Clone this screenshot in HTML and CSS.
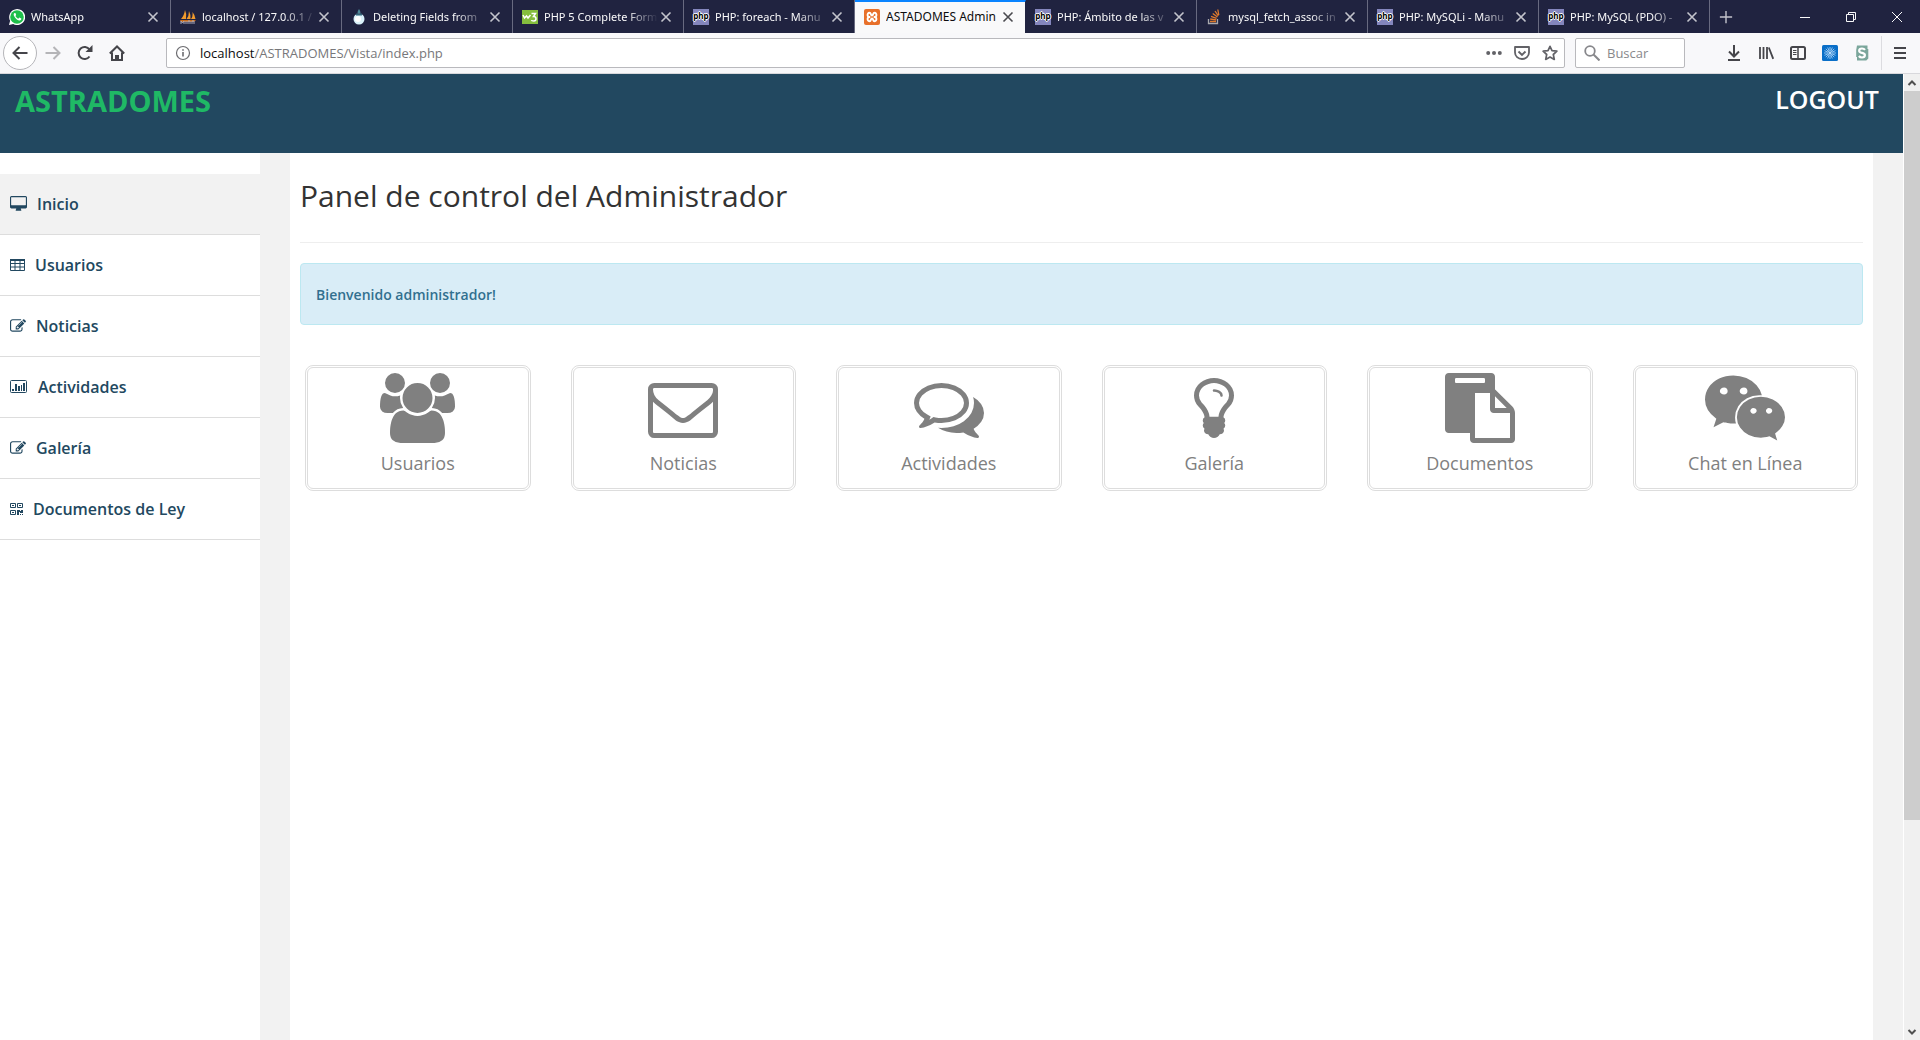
FILE: index.html
```html
<!DOCTYPE html>
<html lang="es">
<head>
<meta charset="utf-8">
<title>ASTADOMES Admin</title>
<link rel="stylesheet" href="styles.css">
</head>
<body>
<svg class="sprite" aria-hidden="true">
  <symbol id="close" viewBox="0 0 16 16"><path d="M3.5 3.5l9 9M12.5 3.5l-9 9" fill="none" stroke="currentColor" stroke-width="1.6"/></symbol>
  <symbol id="edit" viewBox="0 0 1792 1792"><path d="M888 1184l116-116-152-152-116 116v56h96v96h56zm440-720q-16-16-33 1l-350 350q-17 17-1 33t33-1l350-350q17-17 1-33zm80 594v190q0 119-84.5 203.5t-203.5 84.5h-832q-119 0-203.5-84.5t-84.5-203.5v-832q0-119 84.5-203.5t203.5-84.5h832q63 0 117 25 15 7 18 23 3 17-9 29l-49 49q-14 14-32 8-23-6-45-6h-832q-66 0-113 47t-47 113v832q0 66 47 113t113 47h832q66 0 113-47t47-113v-126q0-13 9-22l64-64q15-15 35-7t20 29zm-96-738l288 288-672 672h-288v-288zm444 132l-92 92-288-288 92-92q28-28 68-28t68 28l152 152q28 28 28 68t-28 68z"/></symbol>
</svg>

<div class="tabbar">
  <div class="tabs">
    <div class="tab"><svg class="fav" viewBox="0 0 16 16"><path d="M0 16l1.100-4.200A8 8 0 1 1 4.200 15z" fill="#fff"/><circle cx="8" cy="8" r="6.800" fill="#1fbf4b"/><path d="M5.500 4c-1.300 1-1 2.500.5 4.500s3.300 3.200 4.800 3c1-.2 1.600-1 1.500-1.900L10.300 8.600l-1 1.100C8 9.200 7 8.200 6.400 7l.8-1L6.400 4z" fill="#fff"/></svg><span class="tab-title">WhatsApp</span><button class="tab-close" aria-label="Cerrar"><svg viewBox="0 0 16 16"><use href="#close"/></svg></button></div>
    <div class="tab"><svg class="fav" viewBox="0 0 16 16"><path d="M1 10Q4 7 5 1q2 4 1 9zM6.500 10Q9 7 9 2q2 4 1.500 8zM11 10q2-2 1.500-7Q15 6 15.500 10z" fill="#f29b2c"/><path d="M0 11h16l-2 2H1z" fill="#c96c1c"/><path d="M1 15v-3l1.500 2L4 12v3M6 12v3M8 15v-3h2v3M12 15v-3h2v3" stroke="#aab" fill="none"/></svg><span class="tab-title">localhost / 127.0.0.1 /</span><button class="tab-close" aria-label="Cerrar"><svg viewBox="0 0 16 16"><use href="#close"/></svg></button></div>
    <div class="tab"><svg class="fav" viewBox="0 0 16 16"><path d="M8 0q1.500 2 1.500 4h-3Q6.500 2 8 0z" fill="#4d8a9a"/><circle cx="8" cy="10" r="5.500" fill="#d9f1fa"/><path d="M5 4.500h6v2H5z" fill="#33677a"/><circle cx="7" cy="10" r="3" fill="#fff"/></svg><span class="tab-title">Deleting Fields from</span><button class="tab-close" aria-label="Cerrar"><svg viewBox="0 0 16 16"><use href="#close"/></svg></button></div>
    <div class="tab"><svg class="fav" viewBox="0 0 16 16"><rect y="1" width="16" height="14" fill="#85be3e"/><path d="M1 6l1.500 3L4.500 7l1.500 2L8.500 6M9.500 4.500h4L11.500 7.500q2.500 0 2.500 2.200t-2.200 2.200T9.500 11" fill="none" stroke="#fff" stroke-width="1.500"/></svg><span class="tab-title">PHP 5 Complete Form</span><button class="tab-close" aria-label="Cerrar"><svg viewBox="0 0 16 16"><use href="#close"/></svg></button></div>
    <div class="tab"><span class="fav php">php</span><span class="tab-title">PHP: foreach - Manu</span><button class="tab-close" aria-label="Cerrar"><svg viewBox="0 0 16 16"><use href="#close"/></svg></button></div>
    <div class="tab tab-active"><svg class="fav" viewBox="0 0 16 16"><rect width="16" height="16" rx="2" fill="#e8702a"/><path d="M6.300 8H5.500C3 8 3 3.800 5.300 3.800S6.300 6.500 8 6.500s.4-2.700 2.700-2.700S13 8 10.500 8h-.8M9.700 8h.8c2.500 0 2.500 4.200.2 4.200S9.700 9.500 8 9.500s-.4 2.700-2.700 2.700S3 8 5.500 8" fill="none" stroke="#fff" stroke-width="1.900"/></svg><span class="tab-title">ASTADOMES Admin</span><button class="tab-close" aria-label="Cerrar"><svg viewBox="0 0 16 16"><use href="#close"/></svg></button></div>
    <div class="tab"><span class="fav php">php</span><span class="tab-title">PHP: Ámbito de las v</span><button class="tab-close" aria-label="Cerrar"><svg viewBox="0 0 16 16"><use href="#close"/></svg></button></div>
    <div class="tab"><svg class="fav" viewBox="0 0 16 16"><path d="M2.500 10v4.500h9V10" fill="none" stroke="#a9a9ae" stroke-width="1.300"/><path d="M4 12.500h6M4.200 10l6 .8M5 7.300l5.600 2M6.700 4.500l4.800 3.500M9 2l3.300 4.800M11.800.5l1 5.500" stroke="#e07a2c" stroke-width="1.300"/></svg><span class="tab-title">mysql_fetch_assoc in</span><button class="tab-close" aria-label="Cerrar"><svg viewBox="0 0 16 16"><use href="#close"/></svg></button></div>
    <div class="tab"><span class="fav php">php</span><span class="tab-title">PHP: MySQLi - Manu</span><button class="tab-close" aria-label="Cerrar"><svg viewBox="0 0 16 16"><use href="#close"/></svg></button></div>
    <div class="tab"><span class="fav php">php</span><span class="tab-title">PHP: MySQL (PDO) -</span><button class="tab-close" aria-label="Cerrar"><svg viewBox="0 0 16 16"><use href="#close"/></svg></button></div>
  </div>
  <button class="new-tab" aria-label="Nueva pestaña"><svg viewBox="0 0 16 16"><path d="M8 1v14M1 8h14" stroke="currentColor" stroke-width="1.600"/></svg></button>
  <div class="window-controls">
    <button aria-label="Minimizar"><svg viewBox="0 0 10 10"><path d="M0 5.500h10" stroke="currentColor"/></svg></button>
    <button aria-label="Restaurar"><svg viewBox="0 0 10 10"><path d="M.5 2.500h7v7h-7zM2.500 2.500v-2h7v7h-2" fill="none" stroke="currentColor"/></svg></button>
    <button aria-label="Cerrar ventana"><svg viewBox="0 0 10 10"><path d="M0 0l10 10M10 0L0 10" stroke="currentColor"/></svg></button>
  </div>
</div>

<div class="toolbar">
  <button class="back" aria-label="Atrás"><svg viewBox="0 0 16 16"><path d="M15.500 8H1.500M7.500 2L1.500 8l6 6" fill="none" stroke="currentColor" stroke-width="2"/></svg></button>
  <button class="tool disabled" aria-label="Adelante"><svg viewBox="0 0 16 16"><path d="M.5 8h14M8.500 2l6 6-6 6" fill="none" stroke="currentColor" stroke-width="2"/></svg></button>
  <button class="tool" aria-label="Recargar"><svg viewBox="0 0 16 16"><path d="M12.500 11.500A6 6 0 1 1 12.500 4.500" fill="none" stroke="currentColor" stroke-width="2"/><path d="M15.500 0v7h-7z" fill="currentColor"/></svg></button>
  <button class="tool" aria-label="Inicio"><svg viewBox="0 0 16 16"><path d="M.8 8.500L8 1.500l7.200 7M3 7.500V15h10V7.500" fill="none" stroke="currentColor" stroke-width="2"/><path d="M6 15v-5h4v5z" fill="currentColor"/></svg></button>
  <div class="urlbar">
    <svg class="info" viewBox="0 0 16 16"><circle cx="8" cy="8" r="6.500" fill="none" stroke="currentColor" stroke-width="1.200"/><path d="M8 7v4.500M8 4.200v1.600" stroke="currentColor" stroke-width="1.600"/></svg>
    <span class="url">localhost<span class="path">/ASTRADOMES/Vista/index.php</span></span>
    <button class="url-btn" aria-label="Más acciones"><svg viewBox="0 0 16 16"><circle cx="2.200" cy="8" r="2"/><circle cx="8" cy="8" r="2"/><circle cx="13.800" cy="8" r="2"/></svg></button>
    <button class="url-btn" aria-label="Guardar en Pocket"><svg viewBox="0 0 16 16"><path d="M1 2h14v5.500a7 6.500 0 0 1-14 0z" fill="none" stroke="currentColor" stroke-width="1.800" stroke-linejoin="round"/><path d="M4.500 6.500L8 10l3.500-3.500" fill="none" stroke="currentColor" stroke-width="1.900"/></svg></button>
    <button class="url-btn" aria-label="Marcador"><svg viewBox="0 0 16 16"><path d="M8 1.300l2 4.400 4.900.5-3.600 3.300 1 4.900L8 12l-4.300 2.400 1-4.900L1.100 6.200 6 5.700z" fill="none" stroke="currentColor" stroke-width="1.700" stroke-linejoin="round"/></svg></button>
  </div>
  <label class="search"><svg viewBox="0 0 16 16"><circle cx="6" cy="6" r="4.800" fill="none" stroke="currentColor" stroke-width="1.800"/><path d="M9.500 9.500l6 6" stroke="currentColor" stroke-width="2"/></svg><input type="text" placeholder="Buscar" aria-label="Buscar"></label>
  <div class="tools">
    <button class="tool" aria-label="Descargas"><svg viewBox="0 0 16 16"><path d="M8 0v11M3 6.500l5 5 5-5M2 15h12" fill="none" stroke="currentColor" stroke-width="2"/></svg></button>
    <button class="tool" aria-label="Biblioteca"><svg viewBox="0 0 16 16"><path d="M2 2v12M5.500 2v12M9 2v12M10.800 2.500l4.400 11.300" fill="none" stroke="currentColor" stroke-width="1.800"/></svg></button>
    <button class="tool" aria-label="Barras laterales"><svg viewBox="0 0 16 16"><rect x="1" y="2" width="14" height="12" rx="1.500" fill="none" stroke="currentColor" stroke-width="2"/><path d="M8 2v12" stroke="currentColor" stroke-width="1.500"/><path d="M3 5.500h3.500M3 7.500h3.500M3 9.500h3.500" stroke="currentColor"/></svg></button>
    <button class="tool" aria-label="Extensión"><svg viewBox="0 0 16 16"><rect width="16" height="16" rx="1.500" fill="#0a6fc8"/><path d="M8 2v12M2 8h12M3.800 3.800l8.400 8.400M12.200 3.800l-8.400 8.400M5.700 2.500l1.500 3.700M8.800 9.800l1.500 3.700M10.300 2.500L8.800 6.200M7.200 9.800l-1.500 3.700M2.500 5.700l3.700 1.500M9.800 8.800l3.700 1.500M13.500 5.700L9.800 7.200M6.200 8.800l-3.700 1.500" stroke="#cfe8ff" stroke-width=".7"/></svg></button>
    <button class="tool" aria-label="Extensión S"><svg viewBox="0 0 16 16"><path d="M3 .5h10.500V4h.8v9.500l-2 2H3V12h-.8V5z" fill="#7ba69b"/><path d="M11 4.800Q10 3.500 8 3.500q-2.800 0-2.800 2.200Q5.200 7.300 8 7.900t2.900 2.200q0 2.400-2.900 2.400-2 0-3.100-1.500" fill="none" stroke="#fff" stroke-width="2.200"/></svg></button>
    <button class="tool menu" aria-label="Menú"><svg viewBox="0 0 16 16"><path d="M2 3h12M2 8h12M2 13h12" stroke="currentColor" stroke-width="2"/></svg></button>
  </div>
</div>

<div class="viewport">
  <div class="page">
    <header class="header">
      <a class="brand" href="#">ASTRADOMES</a>
      <a class="logout" href="#">LOGOUT</a>
    </header>
    <div class="wrapper">
      <nav class="sidebar">
        <a class="current" href="#"><svg width="17" height="16" viewBox="-64 0 1920 1792"><path d="M1728 992v-832q0-13-9.500-22.500t-22.500-9.500h-1600q-13 0-22.500 9.500t-9.500 22.500v832q0 13 9.500 22.500t22.500 9.500h1600q13 0 22.500-9.500t9.500-22.500zm128-832v1088q0 66-47 113t-113 47h-544q0 37 16 77.500t32 71 16 43.500q0 26-19 45t-45 19h-512q-26 0-45-19t-19-45q0-14 16-44t32-70 16-78h-544q-66 0-113-47t-47-113v-1088q0-66 47-113t113-47h1600q66 0 113 47t47 113z"/></svg>Inicio</a>
        <a href="#"><svg width="15" height="16" viewBox="0 0 15 16"><path d="M.5 3h14v10.500H.5zM.5 6.500h14M.5 10h14M5 3v10.500M10 3v10.500" fill="none" stroke="currentColor"/><path d="M0 2h15v2H0z"/></svg>Usuarios</a>
        <a href="#"><svg width="16" height="16" viewBox="0 0 1792 1792"><use href="#edit"/></svg>Noticias</a>
        <a href="#"><svg width="18" height="16" viewBox="0 0 18 16"><rect x=".5" y="1.500" width="16" height="12" rx="1" fill="none" stroke="currentColor"/><path d="M2 10h2v2H2zM5 5h2v7H5zM8 7h2v5H8zM11 6h1v6h-1zM13 4h2v8h-2z"/></svg>Actividades</a>
        <a href="#"><svg width="16" height="16" viewBox="0 0 1792 1792"><use href="#edit"/></svg>Galería</a>
        <a href="#"><svg width="13" height="16" viewBox="0 0 13 16"><path d="M.5 2.500h5v4h-5zM7.500 2.500h5v4h-5zM.5 9.500h5v4h-5z" fill="none" stroke="currentColor"/><path d="M2 4h2v1H2zM9 4h2v1H9zM2 11h2v1H2zM7 9h3v1h1V9h2v3h-3v-1H9v3H7zM10 13h1v1h-1zM12 13h1v1h-1z"/></svg>Documentos de Ley</a>
      </nav>
      <main class="content">
        <h2>Panel de control del Administrador</h2>
        <hr>
        <div class="alert"><strong>Bienvenido administrador!</strong></div>
        <div class="cards">
          <a class="card" href="#"><svg width="75" height="70" viewBox="0 0 1920 1792"><path d="M593 896q-162 5-265 128h-134q-82 0-138-40.500t-56-118.500q0-353 124-353 6 0 43.500 21t97.500 42.500 119 21.500q67 0 133-23-5 37-5 66 0 139 81 256zm1071 637q0 120-73 189.500t-194 69.500h-874q-121 0-194-69.500t-73-189.500q0-53 3.500-103.500t14-109 26.500-108.500 43-97.500 62-81 85.500-53.500 111.500-20q10 0 43 21.500t73 48 107 48 135 21.500 135-21.500 107-48 73-48 43-21.500q61 0 111.500 20t85.500 53.500 62 81 43 97.500 26.500 108.500 14 109 3.500 103.500zm-1024-1277q0 106-75 181t-181 75-181-75-75-181 75-181 181-75 181 75 75 181zm704 384q0 159-112.500 271.500t-271.500 112.500-271.500-112.500-112.500-271.500 112.500-271.500 271.500-112.500 271.500 112.500 112.500 271.500zm576 225q0 78-56 118.500t-138 40.500h-134q-103-123-265-128 81-117 81-256 0-29-5-66 66 23 133 23 59 0 119-21.500t97.500-42.500 43.500-21q124 0 124 353zm-128-609q0 106-75 181t-181 75-181-75-75-181 75-181 181-75 181 75 75 181z"/></svg><span>Usuarios</span></a>
          <a class="card" href="#"><svg width="70" height="70" viewBox="0 0 1792 1792"><path d="M1664 1504v-768q-32 36-69 66-268 206-426 338-51 43-83 67t-86.500 48.500-102.500 24.500h-2q-48 0-102.500-24.500t-86.500-48.500-83-67q-158-132-426-338-37-30-69-66v768q0 13 9.500 22.500t22.500 9.500h1472q13 0 22.500-9.500t9.500-22.500zm0-1051v-24.500l-.5-13-3-12.500-5.500-9-9-7.500-14-2.500h-1472q-13 0-22.500 9.500t-9.500 22.500q0 168 147 284 193 152 401 317 6 5 35 29.500t46 37.500 44.500 31.500 50.500 27.500 43 9h2q20 0 43-9t50.500-27.500 44.500-31.500 46-37.500 35-29.500q208-165 401-317 54-43 100.500-115.500t46.500-131.500zm128-37v1088q0 66-47 113t-113 47h-1472q-66 0-113-47t-47-113v-1088q0-66 47-113t113-47h1472q66 0 113 47t47 113z"/></svg><span>Noticias</span></a>
          <a class="card" href="#"><svg width="70" height="70" viewBox="0 0 1792 1792"><path d="M704 384q-153 0-286 52t-211.500 141-78.500 191q0 82 53 158t149 132l97 56-35 84q34-20 62-39l44-31 53 10q78 14 153 14 153 0 286-52t211.500-141 78.500-191-78.500-191-211.500-141-286-52zm0-128q191 0 353.500 68.500t256.500 186.500 94 257-94 257-256.500 186.500-353.500 68.500q-86 0-176-16-124 88-278 128-36 9-86 16h-3q-11 0-20.500-8t-11.500-21q-1-3-1-6.500t.5-6.500 2-6l2.500-5 3.500-5.500 4-5 4.500-5 4-4.500q5-6 23-25t26-29.500 22.500-29 25-38.500 20.500-44q-124-72-195-177t-71-224q0-139 94-257t256.500-186.500 353.500-68.500zm822 1169q10 24 20.500 44t25 38.500 22.500 29 26 29.500 23 25q1 1 4 4.500t4.500 5 4 5 3.500 5.500l2.500 5 2 6 .5 6.500-1 6.500q-3 14-13 22t-22 7q-50-7-86-16-154-40-278-128-90 16-176 16-271 0-472-132 58 4 88 4 161 0 309-45t264-129q125-92 192-212t67-254q0-77-23-152 129 71 204 178t75 230q0 120-71 224.500t-195 176.500z"/></svg><span>Actividades</span></a>
          <a class="card" href="#"><svg width="70" height="70" viewBox="0 0 1792 1792"><path d="M1120 576q0 13-9.500 22.500t-22.500 9.500-22.500-9.500-9.500-22.500q0-46-54-71t-106-25q-13 0-22.500-9.500t-9.500-22.500 9.500-22.500 22.500-9.500q50 0 99.500 16t87 54 37.500 90zm160 0q0-72-34.500-134t-90-101.500-123-62-136.500-22.500-136.500 22.500-123 62-90 101.500-34.500 134q0 101 68 180 10 11 30.500 33t30.500 33q128 153 141 298h228q13-145 141-298 10-11 30.500-33t30.500-33q68-79 68-180zm128 0q0 155-103 268-45 49-74.500 87t-59.500 95.500-34 107.500q47 28 47 82 0 37-25 64 25 27 25 64 0 52-45 81 13 23 13 47 0 46-31.500 71t-77.500 25q-20 44-60 70t-87 26-87-26-60-70q-46 0-77.500-25t-31.500-71q0-24 13-47-45-29-45-81 0-37 25-64-25-27-25-64 0-54 47-82-4-50-34-107.500t-59.500-95.500-74.500-87q-103-113-103-268 0-99 44.500-184.500t117-142 164-89 186.500-32.500 186.500 32.500 164 89 117 142 44.500 184.500z"/></svg><span>Galería</span></a>
          <a class="card" href="#"><svg width="70" height="70" viewBox="0 0 1792 1792"><path d="M768 1664h896v-640h-416q-40 0-68-28t-28-68v-416h-384v1152zm256-1440v-64q0-13-9.500-22.500t-22.500-9.500h-704q-13 0-22.500 9.500t-9.500 22.500v64q0 13 9.500 22.500t22.500 9.500h704q13 0 22.500-9.500t9.500-22.500zm256 672h299l-299-299v299zm512 128v672q0 40-28 68t-68 28h-960q-40 0-68-28t-28-68v-160h-544q-40 0-68-28t-28-68v-1344q0-40 28-68t68-28h1088q40 0 68 28t28 68v328q21 13 36 28l408 408q28 28 48 76t20 88z"/></svg><span>Documentos</span></a>
          <a class="card" href="#"><svg width="80" height="70" viewBox="0 0 2048 1792"><path d="M580 461q0-41-25-66t-66-25q-43 0-76 25.500t-33 65.500q0 39 33 64.500t76 25.500q41 0 66-24.500t25-65.500zm743 507q0-28-25.500-50t-65.500-22q-27 0-49.500 22.500t-22.500 49.500q0 28 22.500 50.500t49.500 22.500q40 0 65.500-22t25.500-51zm-236-507q0-41-24.500-66t-65.500-25q-43 0-76 25.500t-33 65.500q0 39 33 64.500t76 25.500q41 0 65.500-24.500t24.500-65.500zm635 507q0-28-26-50t-65-22q-27 0-49.500 22.500t-22.500 49.500q0 28 22.500 50.500t49.500 22.500q39 0 65-22t26-51zm-266-397q-31-4-70-4-169 0-311 77t-223.500 208.500-81.500 287.500q0 78 23 152-35 3-68 3-26 0-50-1.500t-55-6.500-44.500-7-54.500-10.500-50-10.500l-253 127 72-218q-290-203-290-490 0-169 97.500-311t264-223.500 363.500-81.500q176 0 332.500 66t262 182.500 136.500 260.500zm592 561q0 117-68.500 223.500t-185.500 193.500l55 181-199-109q-150 37-218 37-169 0-311-70.500t-223.500-191.500-81.500-264 81.500-264 223.500-191.500 311-70.500q161 0 303 70.500t227.500 192 85.500 263.500z"/></svg><span>Chat en Línea</span></a>
        </div>
      </main>
    </div>
  </div>
  <div class="scrollbar">
    <button aria-label="Subir"><svg viewBox="0 0 10 10"><path d="M1.500 7L5 3.500 8.500 7" fill="none" stroke="currentColor" stroke-width="2"/></svg></button>
    <div class="track"><div class="thumb"></div></div>
    <button aria-label="Bajar"><svg viewBox="0 0 10 10"><path d="M1.500 3L5 6.500 8.500 3" fill="none" stroke="currentColor" stroke-width="2"/></svg></button>
  </div>
</div>
</body>
</html>
```

FILE: styles.css
```css
* { box-sizing: border-box; }

body {
  margin: 0;
  min-height: 100vh;
  display: flex;
  flex-direction: column;
  font-family: "Open Sans", sans-serif;
  font-size: 14px;
  color: #333;
  background: #fff;
}

button {
  display: flex;
  align-items: center;
  justify-content: center;
  padding: 0;
  border: 0;
  background: none;
  color: inherit;
}

a { text-decoration: none; }
svg { display: block; flex: none; fill: currentColor; }
.sprite { position: absolute; width: 0; height: 0; }

/* Tab strip */
.tabbar {
  display: flex;
  height: 33px;
  background: #202340;
  color: #f9f9fa;
}
.tabs { display: flex; flex: 0 1 1710px; min-width: 0; }
.tab {
  flex: 1 1 0;
  min-width: 0;
  display: flex;
  align-items: center;
  padding: 1px 9px 0;
  border-right: 1px solid #686a80;
}
.tab-active {
  background: #f9f9fa;
  color: #0c0c0d;
  border-top: 2px solid #0a84ff;
  border-right-color: #202340;
  padding: 0 9px 1px;
}
.fav { width: 16px; height: 16px; margin-right: 6px; flex: none; }
.php {
  background: #8486bd;
  color: #000;
  font-size: 8px;
  font-weight: 700;
  line-height: 14px;
  text-align: center;
  text-shadow: 1px 0 #fff, -1px 0 #fff, 0 1px #fff, 0 -1px #fff;
}
.tab-title {
  flex: 1;
  min-width: 0;
  font-family: "Noto Sans", sans-serif;
  font-size: 11px;
  line-height: 16px;
  white-space: nowrap;
  overflow: hidden;
  mask-image: linear-gradient(to left, transparent, #000 32px);
}
.tab-active .tab-title { mask-image: none; font-size: 12px; }
.tab-close { width: 16px; height: 16px; color: #c3c4cc; }
.tab-active .tab-close { color: #4a4a4f; }
.tab-close svg { width: 16px; height: 16px; }
.new-tab { width: 32px; color: #c3c4cc; }
.new-tab svg { width: 14px; height: 14px; }
.window-controls { display: flex; margin-left: auto; }
.window-controls button { width: 46px; }
.window-controls svg { width: 10px; height: 10px; }

/* Navigation toolbar */
.toolbar {
  display: flex;
  align-items: center;
  height: 41px;
  padding: 0 3px;
  background: #f8f8fa;
  border-bottom: 1px solid #d8d8dc;
  color: #45454a;
}
.back {
  width: 34px;
  height: 34px;
  border: 1px solid #b5b5b9;
  border-radius: 50%;
  background: #fff;
}
.tool { width: 32px; height: 34px; }
.toolbar .tool svg, .back svg { width: 16px; height: 16px; }
.disabled { color: #b5b5b8; }
.urlbar, .search {
  display: flex;
  align-items: center;
  height: 30px;
  background: #fff;
  border: 1px solid #b9b9bd;
  border-radius: 2px;
}
.urlbar { flex: 1; min-width: 0; margin-left: 33px; }
.info { width: 16px; height: 16px; margin: 0 9px 0 8px; color: #6c6c70; }
.url { flex: 1; min-width: 0; font-size: 13px; color: #0c0c0d; white-space: nowrap; overflow: hidden; }
.path { color: #77777a; }
.url-btn { width: 28px; height: 28px; color: #626267; }
.url-btn svg { width: 16px; height: 16px; }
.search { width: 110px; margin-left: 10px; padding-left: 8px; color: #87878b; }
.search svg { width: 16px; height: 16px; }
.search input {
  flex: 1;
  min-width: 0;
  padding: 0 0 0 7px;
  border: 0;
  background: none;
  font: 13px "Open Sans", sans-serif;
}
.search input::placeholder { color: #88888b; opacity: 1; }
.tools { display: flex; align-items: center; margin-left: 33px; }
.menu { width: 36px; margin-left: 3px; border-left: 1px solid #dcdce0; }

/* Page area and scrollbar */
.viewport { flex: 1; display: flex; }
.page { flex: 1; min-width: 0; display: flex; flex-direction: column; }
.scrollbar {
  width: 17px;
  display: flex;
  flex-direction: column;
  background: #f0f0f0;
  border-left: 1px solid #fff;
  color: #505050;
}
.scrollbar button { height: 17px; }
.scrollbar svg { width: 10px; height: 10px; }
.track { flex: 1; display: grid; grid-template-rows: 18fr 5fr; }
.thumb { background: #cdcdcd; }

.header {
  display: flex;
  justify-content: space-between;
  align-items: flex-start;
  height: 79px;
  padding: 7px 24px 0 15px;
  background: #224860;
  line-height: 40px;
}
.brand { font-size: 29px; font-weight: 700; color: #1fb965; }
.logout { font-size: 25px; line-height: 36px; color: #fff; font-weight: 600; }

.wrapper { flex: 1; display: flex; background: #f2f2f2; }
.sidebar { width: 260px; padding-top: 21px; background: #fff; }
.sidebar a {
  display: flex;
  align-items: center;
  gap: 10px;
  height: 61px;
  padding-left: 10px;
  border-bottom: 1px solid #ddd;
  font-size: 16px;
  font-weight: 600;
  color: #224860;
}
.sidebar .current { background: #f2f2f2; }

.content {
  flex: 1;
  min-width: 0;
  margin: 0 30px;
  padding: 20px 10px;
  background: #fff;
}
h2 { margin: 0 0 23px; font-size: 30px; font-weight: 400; line-height: 46px; }
hr { margin: 0 0 20px; border: 0; border-top: 1px solid #eee; }
.alert {
  height: 62px;
  padding: 0 15px;
  border: 1px solid #bce8f1;
  border-radius: 4px;
  background: #d9edf7;
  color: #31708f;
  line-height: 62px;
}
.alert strong { font-weight: 600; }
.cards {
  display: grid;
  grid-template-columns: repeat(6, 1fr);
  gap: 40px;
  margin-top: 40px;
  padding: 0 5px;
}
.card {
  display: flex;
  flex-direction: column;
  align-items: center;
  height: 126px;
  padding-top: 5px;
  border: 3px double #ddd;
  border-radius: 8px;
  color: #808080;
  font-size: 18px;
  line-height: 26px;
}
.card span { margin-top: 7px; }
```
